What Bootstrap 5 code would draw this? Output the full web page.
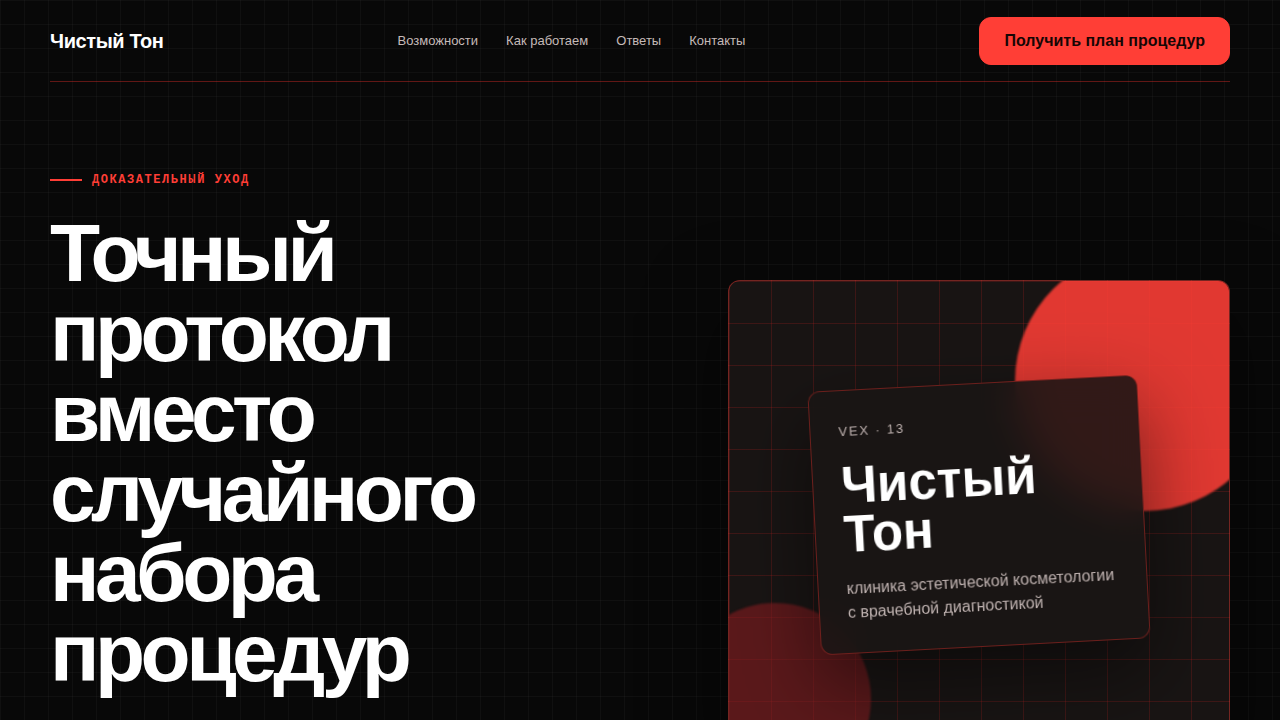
<!DOCTYPE html>
<html lang="ru" data-bs-theme="dark">
<head>
<meta charset="utf-8">
<meta name="viewport" content="width=device-width, initial-scale=1">
<title>Чистый Тон</title>
<link href="https://cdn.jsdelivr.net/npm/bootstrap@5.3.0/dist/css/bootstrap.min.css" rel="stylesheet">
<style>
:root { --accent: #ff3e36; --line: rgba(255, 50, 44, .36); --grid: rgba(255, 36, 36, .16); --muted-text: #beb1af; }
body {
  font-family: "Liberation Sans", Arial, sans-serif;
  color: #fff;
  background-color: #080808;
  background-image:
    linear-gradient(rgba(255,255,255,.03) 1px, transparent 1px),
    linear-gradient(90deg, rgba(255,255,255,.03) 1px, transparent 1px);
  background-size: 24px 24px;
  overflow-x: hidden;
}
.page-wrap { width: calc(100% - 100px); max-width: 1180px; }
.site-head { min-height: 82px; border-bottom: 1px solid var(--line); }
.brand { font-size: 20px; line-height: 24px; letter-spacing: -.02em; }
.menu { gap: 28px; font-size: 13px; line-height: 20px; }
.menu a { color: #c5bab8; }
.btn-plan {
  --bs-btn-color: #160605; --bs-btn-bg: var(--accent); --bs-btn-border-color: var(--accent);
  --bs-btn-hover-color: #160605; --bs-btn-hover-bg: #ff5a52; --bs-btn-hover-border-color: #ff5a52;
  --bs-btn-border-radius: 12px; --bs-btn-padding-x: 24px; --bs-btn-padding-y: 11px;
  --bs-btn-font-weight: 700;
}
.hero { display: grid; grid-template-columns: 5fr 4fr; gap: 50px; padding: 88px 0; }
.hero-copy { padding-bottom: 167px; }
.eyebrow { font: 700 12px/20px "Liberation Mono", monospace; letter-spacing: .13em; color: var(--accent); gap: 10px; }
.eyebrow::before { content: ""; width: 32px; height: 2px; background: var(--accent); }
h1 { font-size: 82px; font-weight: 700; line-height: 80px; letter-spacing: -.055em; max-width: 600px; margin: 23px 0 0; }
.poster {
  height: 470px; border: 1px solid rgba(255,62,54,.4); border-radius: 12px;
  background:
    linear-gradient(var(--grid) 1px, transparent 1px),
    linear-gradient(90deg, var(--grid) 1px, transparent 1px), #181413;
  background-size: 42px 42px;
  box-shadow: 0 30px 80px rgba(0,0,0,.5);
}
.disc { border-radius: 50%; filter: blur(1px); }
.disc-top { width: 260px; height: 260px; top: -30px; right: -46px; background: var(--accent); opacity: .87; }
.disc-low { width: 192px; height: 192px; bottom: -46px; left: -50px; background: #871c20; opacity: .6; }
.plate {
  width: 66%; padding: 28px; border: 1px solid var(--line); border-radius: 12px;
  background: rgba(24,20,19,.88); -webkit-backdrop-filter: blur(20px); backdrop-filter: blur(20px);
  box-shadow: 0 30px 80px rgba(0,0,0,.5); transform: rotate(-3deg);
}
.plate-code { font-size: 13px; line-height: 26px; letter-spacing: .14em; color: var(--muted-text); }
.plate-name { font-size: 51px; line-height: 49px; font-weight: 700; margin: 16px 0 18px; }
.plate-note { font-size: 16px; line-height: 24px; color: var(--muted-text); }
@media (max-width: 900px) {
  .hero { grid-template-columns: 1fr; }
  .hero-copy { padding-bottom: 0; }
  .menu { display: none !important; }
  h1 { font-size: 52px; line-height: 52px; }
}
</style>
</head>
<body>
<div class="page-wrap mx-auto">
  <header class="site-head d-flex align-items-center justify-content-between">
    <a class="brand fw-bold text-white text-decoration-none" href="#top">Чистый Тон</a>
    <nav class="menu d-flex" aria-label="Основная навигация">
      <a class="text-decoration-none" href="#features">Возможности</a>
      <a class="text-decoration-none" href="#process">Как работаем</a>
      <a class="text-decoration-none" href="#answers">Ответы</a>
      <a class="text-decoration-none" href="#contacts">Контакты</a>
    </nav>
    <button type="button" class="btn btn-plan">Получить план процедур</button>
  </header>
  <main class="hero align-items-center" id="top">
    <div class="hero-copy">
      <p class="eyebrow d-flex align-items-center text-uppercase mb-0">Доказательный уход</p>
      <h1>Точный протокол вместо случайного набора процедур</h1>
    </div>
    <div class="poster position-relative overflow-hidden d-flex align-items-center justify-content-center">
      <div class="disc disc-top position-absolute"></div>
      <div class="disc disc-low position-absolute"></div>
      <div class="plate">
        <div class="plate-code">VEX · 13</div>
        <h2 class="plate-name">Чистый Тон</h2>
        <p class="plate-note mb-0">клиника эстетической косметологии с врачебной диагностикой</p>
      </div>
    </div>
  </main>
</div>
<script src="https://cdn.jsdelivr.net/npm/bootstrap@5.3.0/dist/js/bootstrap.bundle.min.js"></script>
</body>
</html>
